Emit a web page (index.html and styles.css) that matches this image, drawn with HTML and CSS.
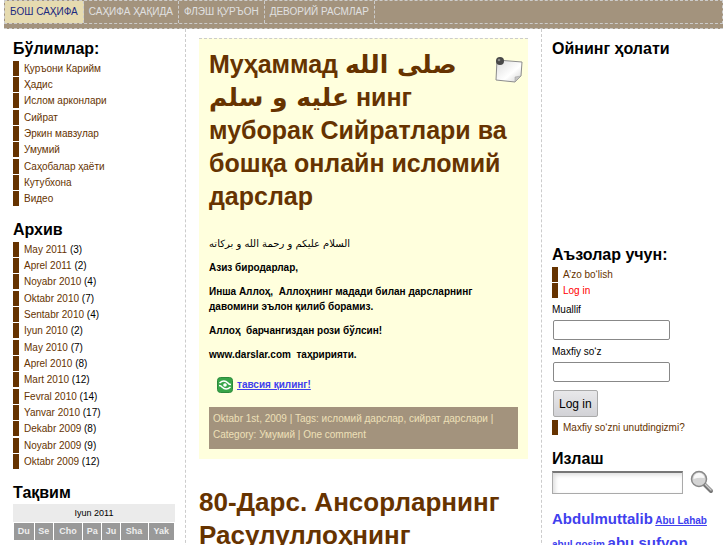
FILE: index.html
```html
<!DOCTYPE html>
<html lang="uz">
<head>
	<title>Бош саҳифа</title>
	<meta charset="utf-8"/>
	<link rel="stylesheet" href="styles.css">
</head>
<body>

<nav class="nav">
	<ul class="menu">
		<li><a class="current" href="#">Бош саҳифа</a></li>
		<li><a href="#">Саҳифа ҳақида</a></li>
		<li><a href="#">Флэш қуръон</a></li>
		<li><a href="#">Деворий расмлар</a></li>
	</ul>
</nav>

<div class="columns">
	<aside class="left">
		<section class="widget">
			<h2>Бўлимлар:</h2>
			<ul class="links">
				<li><a href="#">Қуръони Карийм</a></li>
				<li><a href="#">Ҳадис</a></li>
				<li><a href="#">Ислом арконлари</a></li>
				<li><a href="#">Сийрат</a></li>
				<li><a href="#">Эркин мавзулар</a></li>
				<li><a href="#">Умумий</a></li>
				<li><a href="#">Саҳобалар ҳаёти</a></li>
				<li><a href="#">Кутубхона</a></li>
				<li><a href="#">Видео</a></li>
			</ul>
		</section>
		<section class="widget">
			<h2>Архив</h2>
			<ul class="links">
				<li><a href="#">May 2011</a> (3)</li>
				<li><a href="#">Aprel 2011</a> (2)</li>
				<li><a href="#">Noyabr 2010</a> (4)</li>
				<li><a href="#">Oktabr 2010</a> (7)</li>
				<li><a href="#">Sentabr 2010</a> (4)</li>
				<li><a href="#">Iyun 2010</a> (2)</li>
				<li><a href="#">May 2010</a> (7)</li>
				<li><a href="#">Aprel 2010</a> (8)</li>
				<li><a href="#">Mart 2010</a> (12)</li>
				<li><a href="#">Fevral 2010</a> (14)</li>
				<li><a href="#">Yanvar 2010</a> (17)</li>
				<li><a href="#">Dekabr 2009</a> (8)</li>
				<li><a href="#">Noyabr 2009</a> (9)</li>
				<li><a href="#">Oktabr 2009</a> (12)</li>
			</ul>
		</section>
		<section class="widget">
			<h2>Тақвим</h2>
			<table class="calendar">
				<caption>Iyun 2011</caption>
				<thead>
					<tr><th>Du</th><th>Se</th><th>Cho</th><th>Pa</th><th>Ju</th><th>Sha</th><th>Yak</th></tr>
				</thead>
			</table>
		</section>
	</aside>

	<main class="main">
		<article class="post sticky">
			<svg class="pin" viewBox="0 0 28 26">
				<defs>
					<linearGradient id="paper" x1="0" y1="0" x2="1" y2="1">
						<stop offset="0" stop-color="#dcdcdc"/>
						<stop offset="0.6" stop-color="#ffffff"/>
						<stop offset="1" stop-color="#d0d0d0"/>
					</linearGradient>
				</defs>
				<path d="M2 3 L27 5 L26 19 L20 25 L1 23 Z" fill="url(#paper)" stroke="#8c8c8c"/>
				<path d="M26 19 L20 20 L20 25 Z" fill="#c4c4c4" stroke="#999" stroke-width="0.5"/>
				<circle cx="5" cy="4" r="4" fill="#484848"/>
				<circle cx="4" cy="3" r="1.3" fill="#8a8a8a"/>
			</svg>
			<h1><a href="#">Муҳаммад <span class="arabic">صلى الله عليه و سلم</span> нинг муборак Сийратлари ва бошқа онлайн исломий дарслар</a></h1>
			<div class="text">
				<p class="salom">السلام عليكم و رحمة الله و بركاته</p>
				<p>Азиз биродарлар,</p>
				<p>Инша Аллоҳ,&nbsp; Аллоҳнинг мадади билан дарсларнинг давомини эълон қилиб борамиз.</p>
				<p>Аллоҳ&nbsp; барчангиздан рози бўлсин!</p>
				<p>www.darslar.com&nbsp; таҳририяти.</p>
			</div>
			<div class="share">
				<svg viewBox="0 0 16 16" width="16" height="16">
					<rect x="0.5" y="0.5" width="15" height="15" rx="3" fill="#38a548" stroke="#2c8a3c"/>
					<path d="M2.500 6 Q7 2 11 6 Q12 7.500 14 7.500 M13.500 10 Q9 14 5 10 Q4 8.500 2 8.500" fill="none" stroke="#fff" stroke-width="1.500"/>
					<circle cx="8" cy="8" r="1.800" fill="#fff"/>
				</svg>
				<a href="#">тавсия қилинг!</a>
			</div>
			<div class="meta">
				Oktabr 1st, 2009 | Tags: <a href="#">исломий дарслар</a>, <a href="#">сийрат дарслари</a> | Category: <a href="#">Умумий</a> | <a href="#">One comment</a>
			</div>
		</article>
		<article class="post">
			<h1><a href="#">80-Дарс. Ансорларнинг Расулуллоҳнинг</a></h1>
		</article>
	</main>

	<aside class="right">
		<section class="widget moon">
			<h2>Ойнинг ҳолати</h2>
		</section>
		<section class="widget">
			<h2>Аъзолар учун:</h2>
			<ul class="links">
				<li><a href="#">A’zo bo‘lish</a></li>
				<li><a class="login" href="#">Log in</a></li>
			</ul>
			<form class="members">
				<label for="log">Muallif</label>
				<input id="log" name="log" type="text"/>
				<label for="pwd">Maxfiy so‘z</label>
				<input id="pwd" name="pwd" type="password"/>
				<button type="button">Log in</button>
			</form>
			<ul class="links">
				<li><a href="#">Maxfiy so‘zni unutdingizmi?</a></li>
			</ul>
		</section>
		<section class="widget">
			<h2><label for="s">Излаш</label></h2>
			<form class="search">
				<input id="s" name="s" type="text"/>
				<button type="button" aria-label="Излаш">
					<svg viewBox="0 0 24 24" width="24" height="24">
						<path d="M14 14 L21 21" stroke="#777" stroke-width="4" stroke-linecap="round"/>
						<path d="M15 14 L21 20" stroke="#ccc" stroke-width="1.500" stroke-linecap="round"/>
						<circle cx="9" cy="9" r="7.500" fill="#d4d4d4" stroke="#888" stroke-width="1.500"/>
						<path d="M3.500 9 A5.500 5.500 0 0 1 14.500 8 Q9 7 3.500 9 Z" fill="#f8f8f8"/>
					</svg>
				</button>
			</form>
			<div class="tags">
				<a class="big" href="#">Abdulmuttalib</a>
				<a class="hover" href="#">Abu Lahab</a>
				<a href="#">abul qosim</a>
				<a class="big" href="#">abu sufyon</a>
			</div>
		</section>
	</aside>
</div>

</body>
</html>
```

FILE: styles.css
```css
* {
	box-sizing: border-box;
	margin: 0;
	padding: 0;
}

body {
	margin: 0 4px;
	height: 100vh;
	overflow: hidden;
	background-color: #fff;
	color: #000;
	font: 10px/15px "Liberation Sans", Arial, sans-serif;
}
a {
	color: #663300;
	text-decoration: none;
}
ul {
	list-style: none;
}

.nav {
	padding-bottom: 4px;
	background-color: #a3937d;
	border-bottom: 1px dashed #ccc;
}
	.menu {
		display: flex;
		border: 1px dashed #ccc;
	}
		.menu a {
			display: block;
			padding: 0 5px;
			border-right: 1px dashed #ccc;
			color: #e0e0e0;
			line-height: 22px;
			text-transform: uppercase;
		}
		.menu .current {
			background-color: #e6dbb0;
			color: #1c2a80;
		}

.columns {
	display: grid;
	grid-template-columns: 182px 1fr 182px;
}
.left, .right {
	padding: 9px;
}
.left {
	border-right: 1px dashed #ccc;
	padding-right: 10px;
}
.right {
	border-left: 1px dashed #ccc;
	padding-left: 10px;
}
.widget {
	margin-bottom: 13px;
}
	.widget h2 {
		font-size: 16px;
		line-height: 22px;
	}
	.links {
		padding-top: 1px;
	}
		.links li {
			margin-bottom: 1px;
			padding-left: 5px;
			border-left: 6px solid #663300;
		}
		.links li:nth-child(3n) {
			margin-bottom: 2px;
		}
		.links .login {
			color: #f00;
		}
	.moon {
		min-height: 193px;
	}

.calendar {
	width: 100%;
	border-spacing: 1px;
	font-size: 9px;
}
	.calendar caption {
		background-color: #ebebeb;
		line-height: 18px;
	}
	.calendar th {
		background-color: #999;
		color: #eee;
		line-height: 17px;
	}

.main {
	padding: 9px 13px;
}
	.post {
		margin-bottom: 27px;
	}
	.post h1 {
		font-size: 26px;
		line-height: 33px;
	}
		.arabic {
			font-family: "DejaVu Sans", sans-serif;
		}
	.sticky {
		padding: 9px 10px 10px;
		background-color: #ffffdd;
		border-top: 1px dashed #ccc;
	}
	.sticky h1 {
		font-size: 25px;
	}
	.pin {
		float: right;
		width: 28px;
		height: 26px;
		margin: 9px -5px 0 10px;
	}
	.text {
		padding-top: 23px;
		font-weight: bold;
	}
		.text p {
			margin-bottom: 9px;
		}
		.text .salom {
			font-family: "DejaVu Sans", sans-serif;
			font-weight: normal;
		}
	.share {
		display: flex;
		gap: 4px;
		padding: 6px 8px 14px;
	}
		.share a {
			color: #4040ee;
			font-weight: bold;
			text-decoration: underline;
		}
	.meta {
		padding: 4px 4px 6px;
		background-color: #a3937d;
		color: #eee0b8;
		line-height: 16px;
	}
		.meta a {
			color: inherit;
		}

.members {
	padding-top: 1px;
}
	.members label {
		display: block;
		padding-top: 2px;
	}
	.members input {
		display: block;
		width: 117px;
		height: 20px;
		margin: 3px 1px 2px;
		border: 1px solid #888;
		border-radius: 2px;
	}
	.members button {
		display: block;
		height: 27px;
		margin: 8px 1px 2px;
		padding: 0 5px;
		border: 1px solid #aaa;
		border-radius: 2px;
		background: linear-gradient(#e8e8ea, #d2d2d6);
		font: 12px "Liberation Sans", Arial, sans-serif;
	}

.search {
	display: flex;
	align-items: center;
	gap: 7px;
}
	.search input {
		width: 131px;
		height: 23px;
		border: 1px solid #aaa;
		border-top: 2px solid #777;
		box-shadow: inset 2px 2px 4px #ddd;
	}
	.search button {
		width: 24px;
		height: 24px;
		border: 0;
		background: none;
	}
.tags {
	padding-top: 14px;
	font-weight: bold;
	line-height: 22px;
}
	.tags a {
		color: #4040ee;
	}
	.tags .big {
		font-size: 15px;
	}
	.tags .hover {
		text-decoration: underline;
	}
```
